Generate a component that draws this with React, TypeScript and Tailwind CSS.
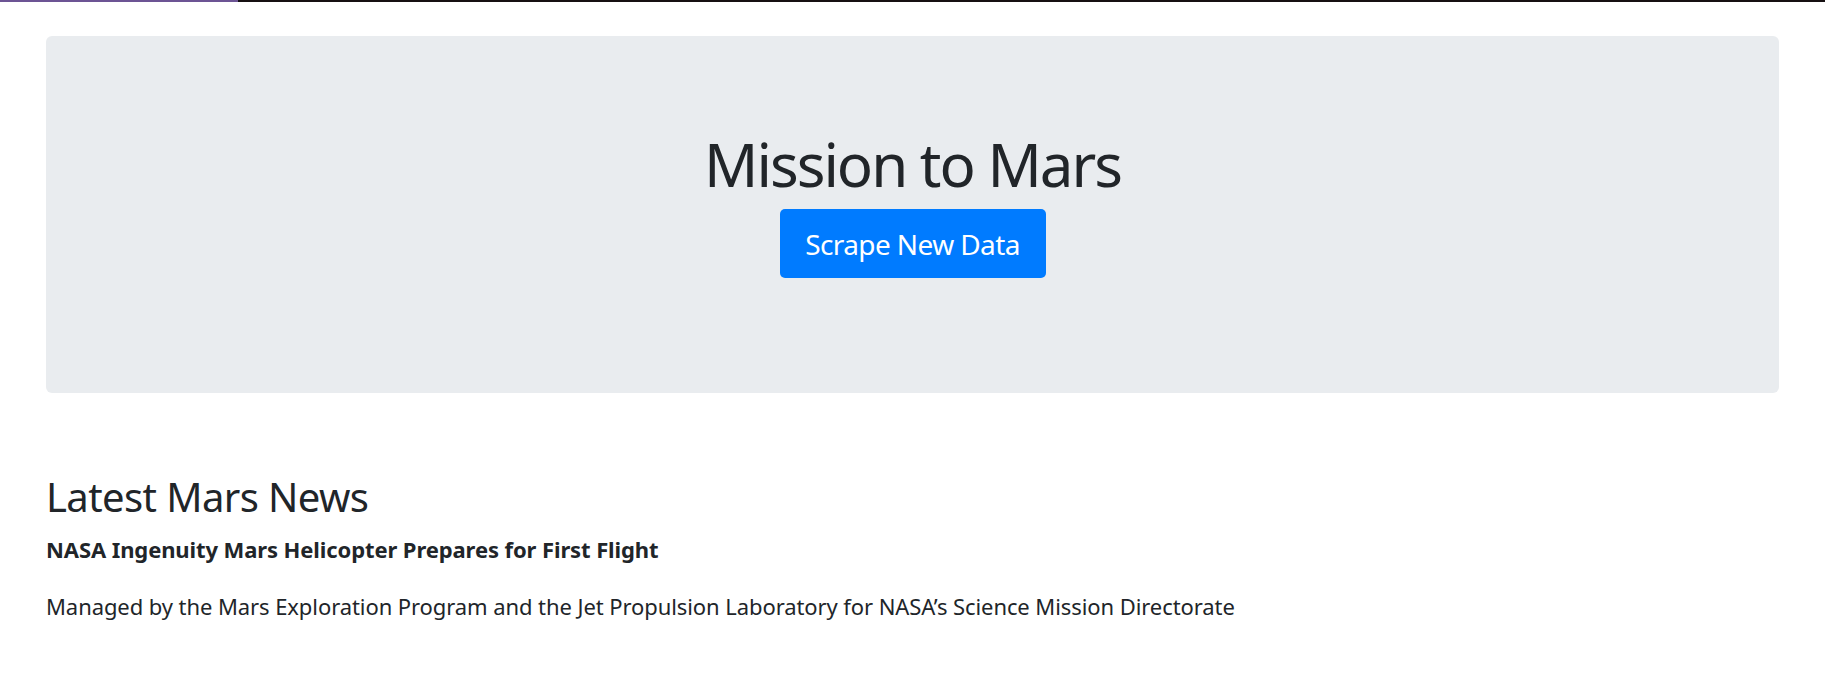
export default function App() {
  return (
    <div className="min-h-screen bg-white text-[#212529]" style={{ fontFamily: '"Noto Sans", "Open Sans", sans-serif' }}>
      <div className="flex h-[2px]">
        <div className="w-[238px] bg-[#6c5494]" />
        <div className="flex-1 bg-[#161012]" />
      </div>

      <div className="px-[46px] pt-[34px]">
        <div className="flex h-[357px] flex-col items-center rounded-[6px] bg-[#e9ecef] pt-[92px]">
          <h1 className="text-[60px] font-normal leading-[72px] tracking-[-2px]">Mission to Mars</h1>
          <button className="mt-[9px] flex h-[69px] w-[266px] items-center justify-center rounded-[5px] bg-[#007bff] text-[28px] tracking-[-0.6px] text-white">
            Scrape New Data
          </button>
        </div>

        <div className="mt-[80px]">
          <h2 className="text-[40px] font-normal leading-[48px] tracking-[-0.6px]">Latest Mars News</h2>
          <h5 className="mt-[14px] text-[22px] font-bold leading-[28px] tracking-[-0.1px]">
            NASA Ingenuity Mars Helicopter Prepares for First Flight
          </h5>
          <p className="mt-[28px] text-[22px] leading-[30px] tracking-[-0.08px]">
            Managed by the Mars Exploration Program and the Jet Propulsion Laboratory for NASA’s Science Mission Directorate
          </p>
        </div>
      </div>
    </div>
  );
}
